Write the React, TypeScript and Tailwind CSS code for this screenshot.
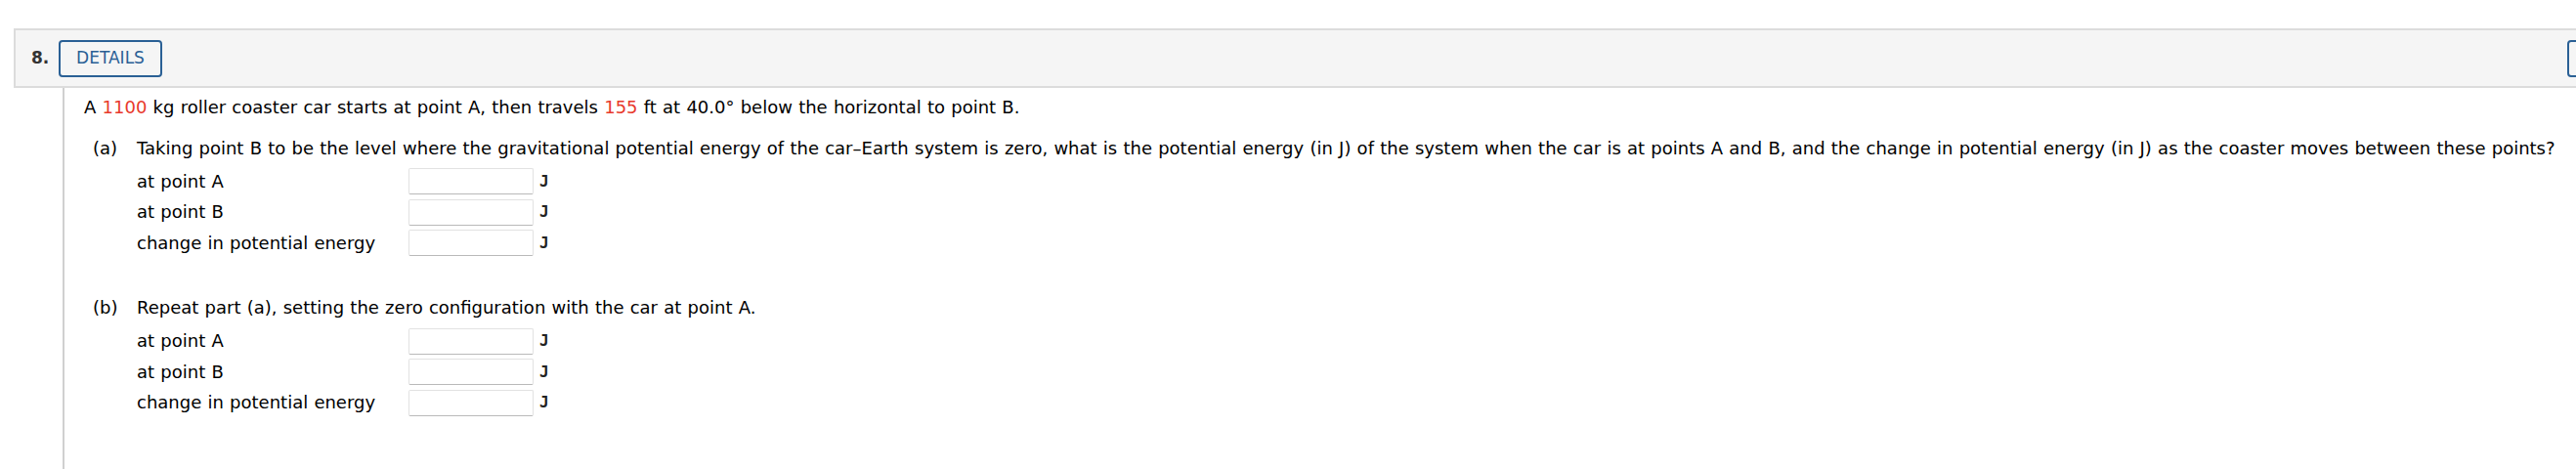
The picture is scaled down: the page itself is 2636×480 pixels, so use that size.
const parts = [
  {
    label: "(a)",
    text: (
      <>
        Taking point B to be the level where the gravitational potential energy of the car&ndash;Earth system is
        zero, what is the potential energy (in J) of the system when the car is at points A and B, and the change in
        potential energy (in J) as the coaster moves between these points?
      </>
    ),
  },
  {
    label: "(b)",
    text: <>Repeat part (a), setting the zero configuration with the car at point A.</>,
  },
];

const rows = ["at point A", "at point B", "change in potential energy"];

function AnswerRow({ label }: { label: string }) {
  return (
    <div className="flex items-center h-[31.5px]">
      <span className="w-[278px] shrink-0">{label}</span>
      <input
        type="text"
        className="w-[128px] h-[27px] bg-white border border-[#e2e2e2] border-b-[#b9b9b9] rounded-[2px] outline-none"
      />
      <span className="ml-[6px] font-['DejaVu_Sans_Mono',monospace] text-[16px] font-bold text-[#222]">J</span>
    </div>
  );
}

function App() {
  return (
    <div className="h-[480px] w-full overflow-hidden bg-white flex flex-col font-['DejaVu_Sans','Verdana',sans-serif] text-[18px] text-black [word-spacing:0.5px]">
      <div className="pt-[29px] pl-[14px]">
        <div className="flex items-center h-[61px] w-[2800px] bg-[#f5f5f5] border-y-2 border-l-2 border-[#dcdcdc] pl-[16px] text-[17px] [word-spacing:0px]">
          <span className="font-bold text-[#333] w-[28px]">8.</span>
          <button className="h-[38px] w-[106px] border-2 border-[#2a6095] rounded-[4px] text-[#2a6095]">
            DETAILS
          </button>
          <button
            aria-label="My notes"
            className="ml-[2461px] h-[38px] w-[120px] border-2 border-[#2a6095] rounded-[4px]"
          />
        </div>
      </div>
      <div className="flex-1 ml-[64px] border-l-2 border-[#d0d0d0] pl-[20px] pt-[8px] leading-[24px]">
        <p>
          A <span className="text-[#e8392c]">1100</span> kg roller coaster car starts at point A, then travels{" "}
          <span className="text-[#e8392c]">155</span> ft at 40.0&deg; below the horizontal to point B.
        </p>
        {parts.map((p, i) => (
          <div key={p.label} className={i === 0 ? "mt-[18px] pl-[9px]" : "mt-[38px] pl-[9px]"}>
            <div className="flex">
              <span className="w-[45px] shrink-0">{p.label}</span>
              <span>{p.text}</span>
            </div>
            <div className={i === 0 ? "pl-[45px] mt-[6px]" : "pl-[45px] mt-[7px]"}>
              {rows.map((r) => (
                <AnswerRow key={r} label={r} />
              ))}
            </div>
          </div>
        ))}
      </div>
    </div>
  );
}

export default App;
